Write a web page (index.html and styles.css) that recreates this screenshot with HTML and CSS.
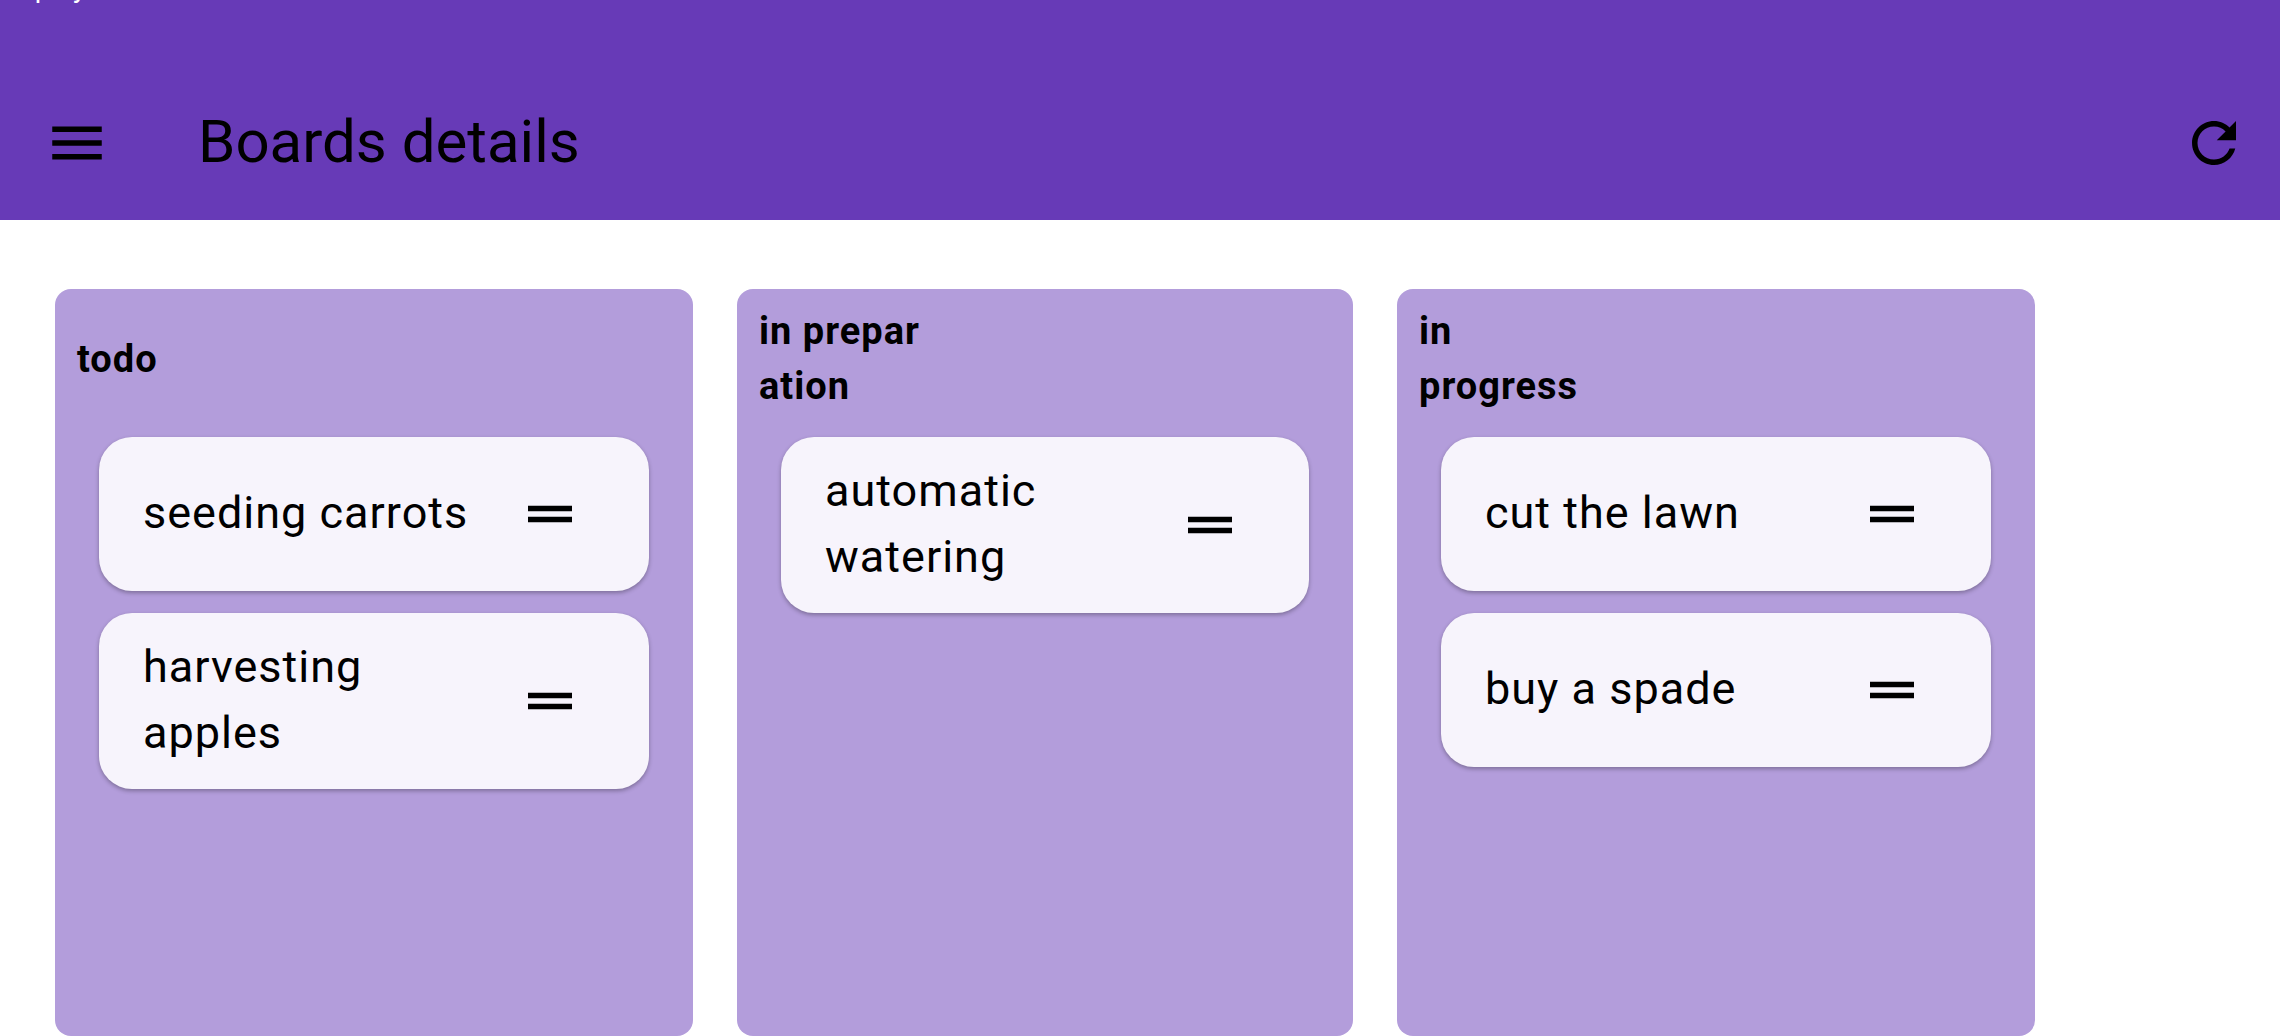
FILE: index.html
```html
<!DOCTYPE html>
<html lang="en">
<head>
<meta charset="utf-8">
<meta name="viewport" content="width=device-width, initial-scale=1">
<title>Boards details</title>
<link rel="stylesheet" href="styles.css">
</head>
<body>
<header class="app-header">
  <div class="status-bar"><span class="status-text">deploy</span></div>
  <div class="toolbar">
    <button class="icon-button" type="button" aria-label="Menu">
      <svg class="icon" viewBox="0 0 24 24"><path d="M3 18h18v-2H3v2zm0-5h18v-2H3v2zm0-7v2h18V6H3z"/></svg>
    </button>
    <h1 class="page-title">Boards details</h1>
    <button class="icon-button" type="button" aria-label="Refresh">
      <svg class="icon" viewBox="0 0 24 24"><path d="M17.65 6.35C16.2 4.9 14.21 4 12 4c-4.42 0-7.99 3.58-7.99 8s3.57 8 7.99 8c3.73 0 6.84-2.55 7.73-6h-2.08c-.82 2.33-3.04 4-5.65 4-3.31 0-6-2.69-6-6s2.69-6 6-6c1.66 0 3.14.69 4.22 1.78L13 11h7V4l-2.35 2.35z"/></svg>
    </button>
  </div>
</header>
<main class="board">
  <section class="column">
    <div class="column-header"><h2 class="column-title">todo</h2></div>
    <ul class="card-list">
      <li class="card">
        <span class="card-text">seeding carrots</span>
        <button class="icon-button" type="button" aria-label="Move seeding carrots"><svg class="icon" viewBox="0 0 24 24"><path d="M20 9H4v2h16V9zM4 15h16v-2H4v2z"/></svg></button>
      </li>
      <li class="card">
        <span class="card-text">harvesting apples</span>
        <button class="icon-button" type="button" aria-label="Move harvesting apples"><svg class="icon" viewBox="0 0 24 24"><path d="M20 9H4v2h16V9zM4 15h16v-2H4v2z"/></svg></button>
      </li>
    </ul>
  </section>
  <section class="column">
    <div class="column-header"><h2 class="column-title">in&nbsp;preparation</h2></div>
    <ul class="card-list">
      <li class="card">
        <span class="card-text">automatic watering</span>
        <button class="icon-button" type="button" aria-label="Move automatic watering"><svg class="icon" viewBox="0 0 24 24"><path d="M20 9H4v2h16V9zM4 15h16v-2H4v2z"/></svg></button>
      </li>
    </ul>
  </section>
  <section class="column">
    <div class="column-header"><h2 class="column-title">in progress</h2></div>
    <ul class="card-list">
      <li class="card">
        <span class="card-text">cut the lawn</span>
        <button class="icon-button" type="button" aria-label="Move cut the lawn"><svg class="icon" viewBox="0 0 24 24"><path d="M20 9H4v2h16V9zM4 15h16v-2H4v2z"/></svg></button>
      </li>
      <li class="card">
        <span class="card-text">buy a spade</span>
        <button class="icon-button" type="button" aria-label="Move buy a spade"><svg class="icon" viewBox="0 0 24 24"><path d="M20 9H4v2h16V9zM4 15h16v-2H4v2z"/></svg></button>
      </li>
    </ul>
  </section>
</main>
</body>
</html>
```
FILE: styles.css
```css
* {
  box-sizing: border-box;
}

body {
  margin: 0;
  min-height: 100vh;
  display: flex;
  flex-direction: column;
  background: #fff;
  color: #000;
  font-family: Roboto, sans-serif;
}

.app-header {
  background: #673ab7;
}

.status-bar {
  display: flex;
  height: 66px;
  padding: 0 4px;
  color: #fff;
  font-size: 28px;
  line-height: 32px;
}

.status-text {
  margin-top: -28px;
}

.toolbar {
  display: flex;
  align-items: center;
  min-height: 154px;
  padding: 0 33px 0 44px;
}

.page-title {
  flex: 1;
  margin: 0 0 0 88px;
  padding-bottom: 2px;
  font-size: 60px;
  font-weight: 400;
  line-height: 76px;
}

.icon-button {
  flex: none;
  padding: 0;
  border: 0;
  background: none;
  color: inherit;
  cursor: pointer;
}

.icon {
  display: block;
  width: 66px;
  height: 66px;
  fill: currentColor;
}

.board {
  flex: 1;
  display: grid;
  grid-template-columns: 29fr 28fr 29fr;
  gap: 44px;
  padding: 69px 245px 0 55px;
}

.column {
  border-radius: 16px;
  background: #b39ddb;
}

.column-header {
  display: flex;
  align-items: center;
  min-height: 140px;
  padding: 0 22px;
}

.column-title {
  max-width: 165px;
  margin: 0;
  font-size: 38px;
  font-weight: 700;
  letter-spacing: 1px;
  line-height: 55px;
  overflow-wrap: anywhere;
}

.card-list {
  display: flex;
  flex-direction: column;
  gap: 22px;
  margin: 0;
  padding: 8px 44px;
  list-style: none;
}

.card {
  display: flex;
  align-items: center;
  gap: 44px;
  min-height: 154px;
  padding: 21px 66px 21px 44px;
  border-radius: 33px;
  background: #f7f4fc;
  box-shadow: 0 2px 4px rgba(0, 0, 0, 0.3);
}

.card-text {
  flex: 1;
  padding-bottom: 2px;
  font-size: 45px;
  letter-spacing: 1px;
  line-height: 66px;
}
```
